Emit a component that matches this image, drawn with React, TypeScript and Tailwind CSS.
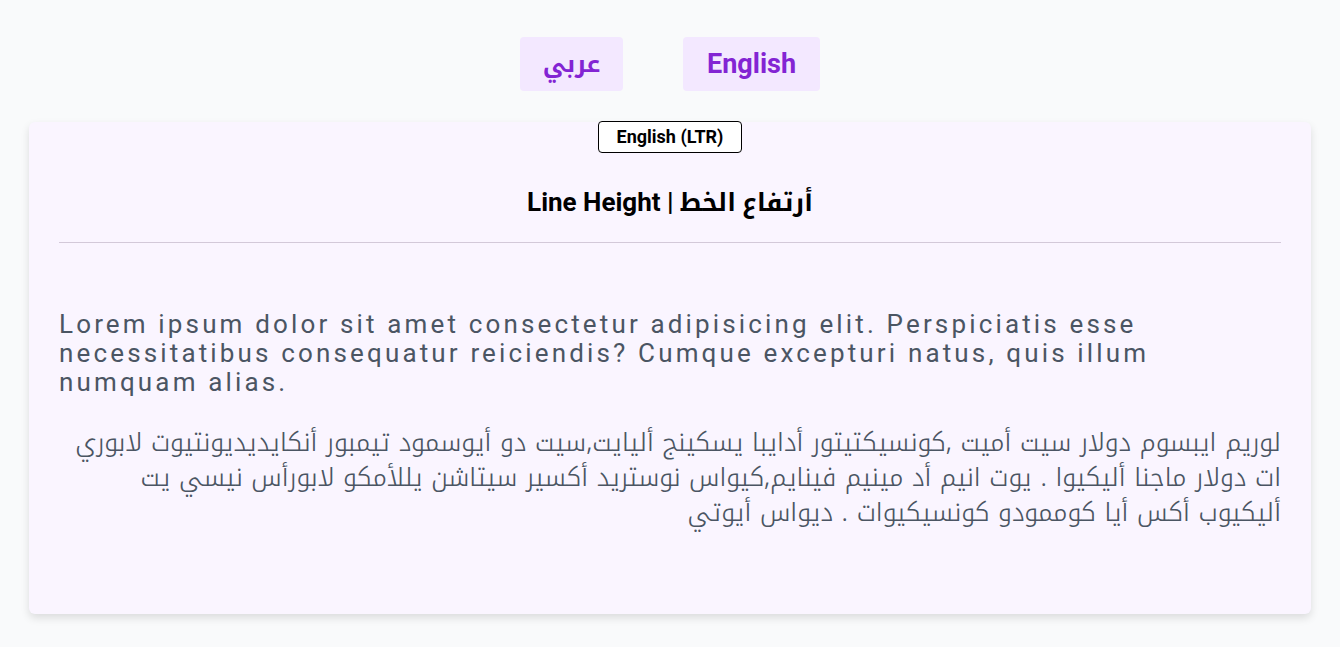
import React from "react";

export default function App() {
  return (
    <div className="min-h-[647px] bg-[#f9fafb] pt-[37px] pb-[30px] font-['Roboto','Noto_Kufi_Arabic',sans-serif]">
      <div className="flex justify-center gap-[60px]">
        <button className="h-[54px] w-[103px] rounded bg-[#f3e8ff] text-[24px] font-bold text-[#8324d3]">عربي</button>
        <button className="h-[54px] w-[137px] rounded bg-[#f3e8ff] text-[27px] font-bold text-[#8324d3]">English</button>
      </div>
      <div className="mx-[29px] mt-[31px] flex flex-col items-center rounded-md bg-[#faf5ff] px-[30px] pb-[84px] shadow-[0_4px_8px_rgba(0,0,0,0.12)]">
        <div className="-mt-px rounded border border-black bg-white px-[18px] py-[3px] text-[18px] font-bold leading-6 text-black">English (LTR)</div>
        <h2 dir="rtl" className="mt-[33px] w-full border-b border-[#d3c9d9] pb-[23px] text-center text-[26px] font-bold leading-8 text-black">
          <span className="text-[25px]">أرتفاع الخط</span> | Line Height
        </h2>
        <p dir="ltr" className="mt-[67px] w-full text-left text-[26px] leading-[29px] tracking-[3.15px] text-[#4b5563]">
          Lorem ipsum dolor sit amet consectetur adipisicing elit. Perspiciatis esse necessitatibus consequatur reiciendis? Cumque excepturi natus, quis illum numquam alias.
        </p>
        <p dir="rtl" className="mt-[28px] w-full text-right font-['Noto_Kufi_Arabic',sans-serif] text-[25.6px] font-light leading-[35px] text-[#4b5563]">
          لوريم ايبسوم دولار سيت أميت ,كونسيكتيتور أدايبا يسكينج أليايت,سيت دو أيوسمود تيمبور أنكايديديونتيوت لابوري ات دولار ماجنا أليكيوا . يوت انيم أد مينيم فينايم,كيواس نوستريد أكسير سيتاشن يللأمكو لابورأس نيسي يت أليكيوب أكس أيا كوممودو كونسيكيوات . ديواس أيوتي
        </p>
      </div>
    </div>
  );
}
